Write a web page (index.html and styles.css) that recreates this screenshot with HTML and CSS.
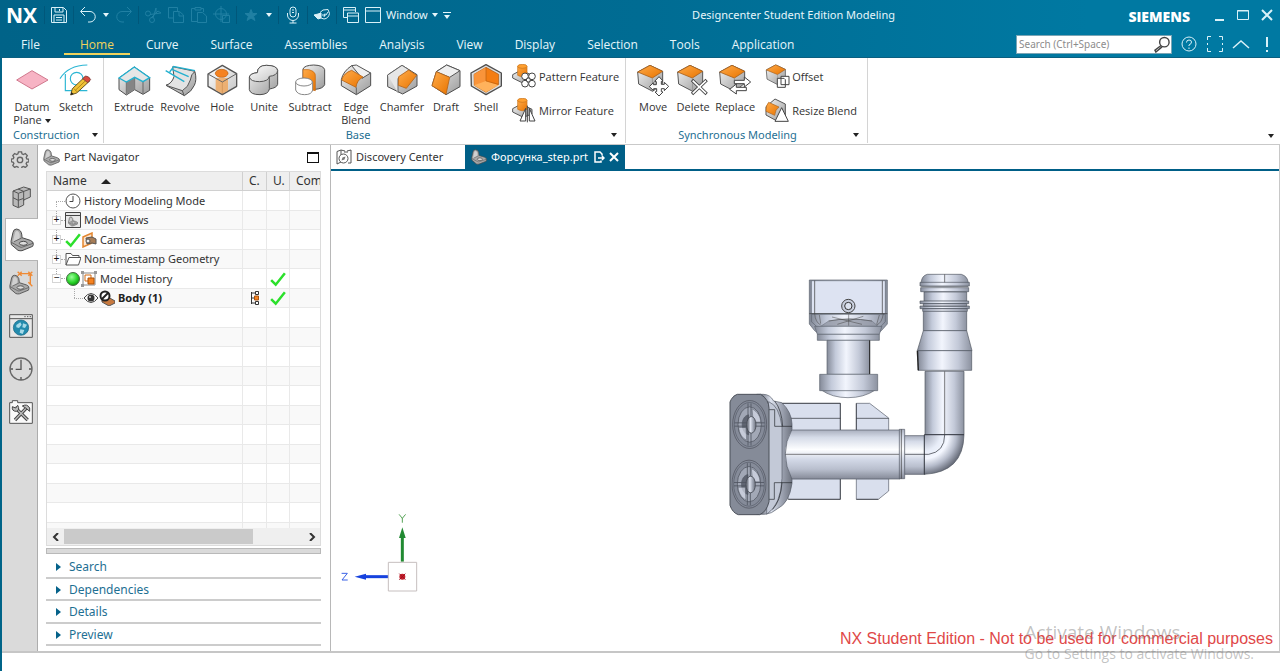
FILE: index.html
```html
<!DOCTYPE html>
<html lang="en">
<head>
<meta charset="utf-8">
<title>Designcenter Student Edition Modeling</title>
<link rel="stylesheet" href="styles.css">
</head>
<body>
<svg class="defs" aria-hidden="true">
  <defs>
    <linearGradient id="steel" x1="0" y1="0" x2="1" y2="1"><stop offset="0" stop-color="#f4f4f4"/><stop offset="1" stop-color="#9a9a9a"/></linearGradient>
    <linearGradient id="top" x1="0" y1="0" x2="1" y2="1"><stop offset="0" stop-color="#fff"/><stop offset="1" stop-color="#c4c4c4"/></linearGradient>
    <linearGradient id="orange" x1="0" y1="0" x2="1" y2="1"><stop offset="0" stop-color="#ffab4a"/><stop offset="1" stop-color="#e87400"/></linearGradient>
    <linearGradient id="vert" x1="0" y1="0" x2="1" y2="0"><stop offset="0" stop-color="#858b99"/><stop offset=".2" stop-color="#c3cada"/><stop offset=".45" stop-color="#f2f5fd"/><stop offset=".75" stop-color="#c3c9d8"/><stop offset="1" stop-color="#8c92a0"/></linearGradient>
    <linearGradient id="horz" x1="0" y1="0" x2="0" y2="1"><stop offset="0" stop-color="#a9afbe"/><stop offset=".15" stop-color="#d5dbe8"/><stop offset=".4" stop-color="#fdfeff"/><stop offset=".6" stop-color="#d3d9e7"/><stop offset=".8" stop-color="#b9bfce"/><stop offset="1" stop-color="#858a98"/></linearGradient>
    <linearGradient id="side" x1="0" y1="0" x2="1" y2="0"><stop offset="0" stop-color="#7b808c"/><stop offset=".15" stop-color="#7b808c"/><stop offset=".4" stop-color="#dfe4f0"/><stop offset=".7" stop-color="#a0a6b4"/><stop offset="1" stop-color="#6f7480"/></linearGradient>
    <radialGradient id="elbow" gradientUnits="userSpaceOnUse" cx="613" cy="509" r="120"><stop offset="0" stop-color="#9fa5b5"/><stop offset=".4" stop-color="#e8edf8"/><stop offset=".6" stop-color="#f4f7ff"/><stop offset=".8" stop-color="#b6bccb"/><stop offset="1" stop-color="#6b707d"/></radialGradient>
    <radialGradient id="green" cx=".4" cy=".35" r=".7"><stop offset="0" stop-color="#9bff9b"/><stop offset=".6" stop-color="#2ad42a"/><stop offset="1" stop-color="#0a8a0a"/></radialGradient>
    <symbol id="bracket" viewBox="0 0 72 72"><path d="M3 40 9 13Q11 3 20 3l8 3q8 5 8 23l25 8q10 4 9 12l-2 6-32 13q-6 1-12-1L4 50Z" fill="#a9a9a9" stroke="#4c4c4c" stroke-width="3" stroke-linejoin="round"/><path d="m9 40 6-26q2-7 9-4 7 6 5 21l-14 8Z" fill="#d0d0d0"/><path d="m4 43 26 14q4 2 8 0l31-11M35 30 12 41" fill="none" stroke="#5a5a5a" stroke-width="2.5"/><ellipse cx="40" cy="46" rx="12" ry="6" fill="#ddd" stroke="#4c4c4c" stroke-width="3"/></symbol>
    <symbol id="check" viewBox="0 0 14 14"><path d="M1 8l4 4L13 2" fill="none" stroke="#2be02b" stroke-width="2.2"/></symbol>
    <symbol id="cube" viewBox="0 0 102 102"><path d="M5 22 42 2 80 20v36L50 80 8 58Z" fill="url(#steel)" stroke="#555" stroke-width="3" stroke-linejoin="round"/><path d="m5 22 37-20 38 18-31 20Z" fill="url(#orange)" stroke="#a9601a" stroke-width="2.5" stroke-linejoin="round"/><path d="M49 41 50 78" stroke="#888" stroke-width="2"/></symbol>
    <symbol id="peg" viewBox="0 0 75 75"><path d="M2 32 28 18 60 34v14L34 58 2 42Z" fill="url(#steel)" stroke="#555" stroke-width="3"/><path d="M17 7v27q13 9 28 0V7Z" fill="url(#orange)" stroke="#c77118" stroke-width="2"/><ellipse cx="31" cy="7" rx="14" ry="6" fill="#ffa030" stroke="#c77118" stroke-width="2"/></symbol>
    <symbol id="port" viewBox="0 0 106 150"><ellipse cx="53" cy="75" rx="51" ry="72" fill="#858b99" stroke="#4b4f59" stroke-width="2"/><ellipse cx="53" cy="75" rx="46" ry="66" fill="none" stroke="#555a66" stroke-width="2"/><ellipse cx="53" cy="75" rx="35" ry="53" fill="#a2a8b6" stroke="#464a54" stroke-width="2"/><path d="M50 46c-26 4-26 54 0 60Z" fill="#606572"/><path d="M60 28c18 8 26 26 26 40H64ZM44 122c-14-6-22-20-24-38h22Z" fill="#d6dbe8" opacity=".7"/><path d="M8 70h90M8 80h90M48 12v126M57 12v126" stroke="#4f5460" stroke-width="2.5"/><ellipse cx="58" cy="76" rx="14" ry="25" fill="url(#side)" stroke="#464a54" stroke-width="2.5"/></symbol>
  </defs>
</svg>

<header class="header">
  <div class="titlebar">
    <strong class="logo">NX</strong>
    <div class="quick">
      <i class="sep"></i>
      <button aria-label="Save"><svg viewBox="0 0 18 18"><path d="M1.500 1.500h12l3 3v12h-15ZM5 2v4h8V2M9.500 3v2M4 16.500V9h10v7.500M6 11.500h6M6 14h6"/></svg></button>
      <i class="sep"></i>
      <button aria-label="Undo"><svg viewBox="0 0 18 18"><path d="M6 1 1.500 5.500 6 10M2 5.500h9a5 5 0 0 1 0 10.500H9"/></svg></button>
      <button class="caret" aria-label="Undo list"><svg viewBox="0 0 6 4"><path d="M0 0h6L3 4Z"/></svg></button>
      <button class="off" aria-label="Redo"><svg viewBox="0 0 18 18"><path d="m12 1 4.500 4.500L12 10M16 5.500H7A5 5 0 0 0 7 16h2"/></svg></button>
      <i class="sep"></i>
      <button class="off" aria-label="Cut"><svg viewBox="0 0 18 18"><circle cx="4" cy="7.500" r="2.500"/><circle cx="8" cy="14" r="2.500"/><path d="M6 8.500 17 7l-3-2L7 12M9 12l3-10v6"/></svg></button>
      <button class="off" aria-label="Copy"><svg viewBox="0 0 18 18"><path d="M6 12H1.500v-10.500h9V5M6.500 5.500h6l4 3.500v7.500h-10ZM12 6v4h4"/></svg></button>
      <button class="off" aria-label="Paste"><svg viewBox="0 0 18 18"><path d="M7 15.500H1.500v-13H5m6 0h2.500V6M5 1.500h6V4H5ZM7.500 6.500h5l4 3.500v6.500h-9Z"/></svg></button>
      <button class="off" aria-label="Move object"><svg viewBox="0 0 18 18"><circle cx="8" cy="8" r="5.500"/><path d="M8 0v16M0 8h16M9.500 9.500h7v7h-7Z"/></svg></button>
      <i class="sep"></i>
      <button class="off" aria-label="Favorites"><svg viewBox="0 0 18 18"><path class="solid" d="m9 3.500 1.600 4H15l-3.400 2.800 1.300 4.200L9 12l-3.900 2.500 1.300-4.200L3 7.500h4.400Z"/></svg></button>
      <button class="caret" aria-label="Favorites list"><svg viewBox="0 0 6 4"><path d="M0 0h6L3 4Z"/></svg></button>
      <i class="sep"></i>
      <button aria-label="Voice"><svg viewBox="0 0 18 18"><rect x="6" y="1" width="6" height="10" rx="3"/><path d="M3.500 7v2a5.500 5.500 0 0 0 11 0V7M9 14.500V17M5.500 17h7M8 4h2M8 6.500h2"/></svg></button>
      <i class="sep"></i>
      <button aria-label="Touch mode"><svg viewBox="0 0 18 18"><path class="solid" d="m1 9 4-1 3-1v5l-3 1-3-3Z"/><path d="M7 6.500 10 4l5-.5 1.500 4q-1 5-5.500 5.500L8 12M9 9h4l2-3M12 7.500 11 11"/></svg></button>
      <i class="sep"></i>
      <button aria-label="Switch window"><svg viewBox="0 0 18 18"><path d="M5 11.500H1.500v-10h12V6M2 4h11M5.500 7v9.500h11V7ZM6 10h10"/></svg></button>
      <button class="text-button"><svg viewBox="0 0 18 18"><path d="M1.500 1.500h15v15h-15ZM2 5h14"/></svg>Window<svg class="tri" viewBox="0 0 6 4"><path d="M0 0h6L3 4Z"/></svg></button>
      <button class="caret" aria-label="Customize toolbar"><svg class="more" viewBox="0 0 8 7"><path d="M0 0h8v1H0ZM1 3h6L4 7Z"/></svg></button>
    </div>
    <h1 class="title">Designcenter Student Edition Modeling</h1>
    <strong class="siemens">SIEMENS</strong>
    <div class="window-buttons">
      <button aria-label="Minimize"><svg viewBox="0 0 14 14"><path d="M3 12h9" stroke-width="2"/></svg></button>
      <button aria-label="Maximize"><svg viewBox="0 0 14 14"><path d="M1.500 2.500h11v9h-11ZM1 3h12"/></svg></button>
      <button aria-label="Close"><svg viewBox="0 0 14 14"><path d="m2 2 10 10M12 2 2 12" stroke-width="2"/></svg></button>
    </div>
  </div>
  <div class="menubar">
    <nav class="tabs">
      <button class="file">File</button><button class="current">Home</button><button>Curve</button><button>Surface</button><button>Assemblies</button><button>Analysis</button><button>View</button><button>Display</button><button>Selection</button><button>Tools</button><button>Application</button>
    </nav>
    <div class="search">
      <input type="text" placeholder="Search (Ctrl+Space)" aria-label="Search">
      <button aria-label="Run search"><svg viewBox="0 0 18 18"><circle cx="11.500" cy="6.500" r="5"/><path d="m8 10-6.500 5 1 2L9 11.500"/></svg></button>
    </div>
    <div class="help">
      <button aria-label="Help"><svg viewBox="0 0 18 18"><circle cx="9" cy="9" r="7"/><path d="M6.500 7.500q0-2.500 2.500-2.500t2.500 2-2.500 3v1M9 12.500V14"/></svg></button>
      <button aria-label="Full screen"><svg viewBox="0 0 18 18"><path d="M1.500 5V1.500H5m8 0h3.500V5m0 8v3.500H13m-8 0H1.500V13M1.500 8v2M16.500 8v2"/></svg></button>
      <button aria-label="Minimize ribbon"><svg viewBox="0 0 18 18"><path d="m1 13 8-7 8 7" stroke-width="1.500"/></svg></button>
      <button aria-label="Alerts"><svg viewBox="0 0 18 18"><path d="M9 2v10m0 3v2" stroke-width="2"/></svg></button>
    </div>
  </div>
</header>

<div class="app">
  <section class="ribbon" aria-label="Home">
    <div class="group construction">
      <div class="tools">
        <button class="tool mid"><svg viewBox="45 18 102 102"><path d="m50 66 46-28 48 28-48 27Z" fill="#f7b3c4" stroke="#d0788d" stroke-width="3"/></svg><span>Datum Plane <b class="down"></b></span></button>
        <button class="tool wide"><svg viewBox="177 18 102 102"><path d="M180 62Q204 22 262 21M196 48v50h66" fill="none" stroke="#2cb6d4" stroke-width="3.500"/><circle cx="230" cy="62" r="19" fill="none" stroke="#2cb6d4" stroke-width="3.500"/><path d="m212 111 5-19 38-36 15 12-40 37Z" fill="#f0c238" stroke="#4a3a10" stroke-width="2.500"/><path d="m221 91 12 12M226 97l36-34" stroke="#a87d14" stroke-width="2.500"/><path d="m248 62 9-8q10 0 15 11l-9 9Z" fill="#d94a40" stroke="#633" stroke-width="2"/><path d="m212 111 2-9 7 6Z" fill="#222"/></svg><span>Sketch</span></button>
      </div>
      <button class="group-name">Construction<b class="down"></b></button>
    </div>
    <div class="group base">
      <div class="tools">
        <button class="tool wide"><svg viewBox="351 18 102 102"><path d="m357 60 46-33 46 32v38l-20 12-25-14-25 16-22-16Z" fill="url(#steel)" stroke="#4e4e4e" stroke-width="3" stroke-linejoin="round"/><path d="M379 72v37M404 58v37M429 71v36" stroke="#666" stroke-width="3"/><path d="m380 73 23-14 1 36-24 14Z" fill="#858585"/><path d="m357 60 46-33 46 32-20 12-25-13-25 14Z" fill="#e6e6e6" stroke="#23b0cf" stroke-width="4"/></svg><span>Extrude</span></button>
        <button class="tool wide"><svg viewBox="489 18 102 102"><path d="M498 82q16-4 24-22l20-28 43 10q6 24-2 40-7 18-30 31Z" fill="url(#steel)" stroke="#4e4e4e" stroke-width="3" stroke-linejoin="round"/><path d="M498 82q18-6 24-26l-4-30 67 14q-12 8-14 26-6 22-24 32Z" fill="#e3e3e3" stroke="#555" stroke-width="3" stroke-linejoin="round"/><path d="m547 98 5 14" stroke="#555" stroke-width="3"/><path d="m519 25 66 13M497 38l56 33M509 42l12-16M516 34l50 22" stroke="#23b0cf" stroke-width="4"/></svg><span>Revolve</span></button>
        <button class="tool narrow"><svg viewBox="619 18 102 102"><path d="m628 48 43-26 43 25v38l-43 25-43-25Z" fill="url(#top)" stroke="#555" stroke-width="4" stroke-linejoin="round"/><path d="M671 72v38" stroke="#666" stroke-width="3"/><path d="M651 60h37v38l-17 9-20-10Z" fill="#f0a559" opacity=".8"/><path d="m628 48 43 24 43-25" fill="none" stroke="#666" stroke-width="3"/><ellipse cx="669" cy="46" rx="19" ry="12" fill="#f58220" stroke="#bb5d0c" stroke-width="2"/></svg><span>Hole</span></button>
        <button class="tool wide"><svg viewBox="747 18 102 102"><path d="M754 57q3-11 24-13 1-22 27-22 32 0 34 16v41q-3 11-25 14-2 16-28 17-29 0-32-15Z" fill="url(#steel)" stroke="#4e4e4e" stroke-width="3"/><path d="M754 57q3-11 24-13 1-22 27-22 32 0 34 16-2 15-25 17-2 15-29 16-28 0-31-14Z" fill="url(#top)" stroke="#555" stroke-width="3"/><path d="M814 56v36" stroke="#555" stroke-width="3"/></svg><span>Unite</span></button>
        <button class="tool wide"><svg viewBox="879 18 102 102"><path d="M909 33q4-11 32-12 30 1 33 14v45q-5 12-28 14l-37-20Z" fill="url(#steel)" stroke="#4e4e4e" stroke-width="3"/><path d="M909 35q20-3 30 5 9 7 7 17v41l-9-2V70q-8-9-28-10Z" fill="url(#orange)" stroke="#be6512" stroke-width="2"/><path d="M887 72v24q5 14 27 14 21 0 24-14V72" fill="#fff" stroke="#888" stroke-width="3"/><ellipse cx="912" cy="72" rx="25" ry="12" fill="#fff" stroke="#888" stroke-width="3"/></svg><span>Subtract</span></button>
        <button class="tool wide"><svg viewBox="54 18 102 102"><path d="m92 23 57 22v38l-43 27-45-27V65Q66 40 92 23Z" fill="url(#steel)" stroke="#4e4e4e" stroke-width="3" stroke-linejoin="round"/><path d="m92 23 14-2 43 24-26 16Z" fill="#f0f0f0" stroke="#555" stroke-width="3"/><path d="m92 37 34 20q-19 10-21 31L62 66q6-21 30-29Z" fill="url(#orange)" stroke="#b76417" stroke-width="2.500"/><path d="m106 88v21" stroke="#666" stroke-width="3"/></svg><span>Edge Blend</span></button>
        <button class="tool wide"><svg viewBox="195 18 102 102"><path d="m203 51 43-29 45 28v34l-43 24-45-22Z" fill="url(#steel)" stroke="#4e4e4e" stroke-width="3" stroke-linejoin="round"/><path d="m203 51 43-29 22 14-34 25v43" fill="#e6e6e6" stroke="#666" stroke-width="3"/><path d="m236 56 30-20 24 16-31 39-24-9Z" fill="url(#orange)" stroke="#b76417" stroke-width="2.500"/></svg><span>Chamfer</span></button>
        <button class="tool mid"><svg viewBox="331 18 102 102"><path d="m353 41 31-20 40 17v48l-42 24-42-27Z" fill="url(#steel)" stroke="#4e4e4e" stroke-width="3" stroke-linejoin="round"/><path d="m353 41 31-20 40 17-31 20Z" fill="#efefef" stroke="#555" stroke-width="3"/><path d="m353 41 40 17-11 51-42-26Z" fill="url(#orange)" stroke="#b76417" stroke-width="2.500"/></svg><span>Draft</span></button>
        <button class="tool narrow"><svg viewBox="448 18 102 102"><path d="m454 45 45-25 46 25v39l-46 26-44-26Z" fill="#ddd" stroke="#4e4e4e" stroke-width="4" stroke-linejoin="round"/><path d="m463 49 36-21 38 21v30l-38 24-35-21Z" fill="#f47d12" stroke="#a75712" stroke-width="2"/><path d="m463 49 36-21v45l-35 9Z" fill="#f9943a"/><path d="m463 82 36-13 38 13-38 21Z" fill="#ffb25c"/><path d="M499 28v41l38 10" fill="none" stroke="#b95d0c" stroke-width="2"/></svg><span>Shell</span></button>
        <div class="stack">
          <button><svg viewBox="579 22 75 75"><use href="#peg" x="579" y="22" width="75" height="75"/><g fill="#fff" stroke="#444" stroke-width="3"><circle cx="618" cy="59" r="10"/><circle cx="639" cy="59" r="10"/><circle cx="618" cy="81" r="10"/><circle cx="639" cy="81" r="10"/><circle cx="628" cy="70" r="6"/></g></svg>Pattern Feature</button>
          <button><svg viewBox="579 122 75 75"><use href="#peg" x="579" y="122" width="75" height="75"/><path d="m620 153-17 38h17ZM631 153l17 38h-17ZM625 145v50" fill="#fff" stroke="#444" stroke-width="3"/></svg>Mirror Feature</button>
        </div>
      </div>
      <button class="group-name">Base<b class="down"></b></button>
    </div>
    <div class="group sync">
      <div class="tools">
        <button class="tool mid"><svg viewBox="57 18 102 102"><use href="#cube" x="57" y="20" width="102" height="102"/><path d="m126 56 12 13-5 1v9h9v-6l13 12-13 13v-6h-9v9l5 1-12 12-12-12 5-1v-9h-9v6L97 86l12-12v6h9v-9l-5-1Z" fill="#fff" stroke="#444" stroke-width="3"/></svg><span>Move</span></button>
        <button class="tool narrow"><svg viewBox="177 18 102 102"><use href="#cube" x="177" y="20" width="102" height="102"/><path d="m225 66 44 42m0-42-44 42" stroke="#444" stroke-width="10"/><path d="m227 68 40 38m0-38-40 38" stroke="#fff" stroke-width="5"/></svg><span>Delete</span></button>
        <button class="tool wide"><svg viewBox="307 18 102 102"><use href="#cube" x="307" y="20" width="102" height="102"/><path d="M356 67h30V57l19 15-19 15V77h-30ZM392 88h-30V78l-20 16 20 14V98h30Z" fill="#fff" stroke="#444" stroke-width="3"/></svg><span>Replace</span></button>
        <div class="stack">
          <button><svg viewBox="449 22 75 75"><use href="#cube" x="449" y="23" width="78" height="78"/><path d="M497 59h24v25h-24ZM486 65h20l4 4v23h-24Z" fill="#fff" stroke="#444" stroke-width="3"/></svg>Offset</button>
          <button><svg viewBox="449 122 75 75"><path d="m452 148 27-23 31 15v33l-27 17-31-17Z" fill="url(#steel)" stroke="#555" stroke-width="3"/><path d="m460 135 31 14q-11 7-13 25l-26-12q-1-18 8-27Z" fill="url(#orange)" stroke="#a9601a" stroke-width="2"/><path d="m499 151-20 41h40Z" fill="#fff" stroke="#444" stroke-width="3"/></svg>Resize Blend</button>
        </div>
      </div>
      <button class="group-name">Synchronous Modeling<b class="down"></b></button>
    </div>
    <button class="ribbon-more" aria-label="Ribbon options"><b class="down"></b></button>
  </section>

  <main class="work">
    <nav class="rail" aria-label="Resource bar">
      <button class="gear" aria-label="Settings"><svg viewBox="0 0 20 20"><path d="M8.300 2h3.400l.5 2.300 1.600.8 2.100-1.200 2.200 2.200-1.200 2.100.6 1.600 2.300.5v2.800l-2.300.6-.7 1.500 1.300 2.200-2.200 2-2.100-1.200-1.600.7-.5 2.100H8.300l-.6-2.200-1.500-.6-2.200 1.200-2-2.200 1.200-2.100-.7-1.500-2.200-.6v-2.800l2.300-.5.6-1.600L2 6.100l2-2.200 2.200 1.200 1.500-.8Z" fill="none" stroke="#666" stroke-width="1.500"/><circle cx="10" cy="11" r="3" fill="none" stroke="#666" stroke-width="1.500"/></svg></button>
      <button aria-label="Assembly Navigator"><svg viewBox="0 0 72 72"><path d="m12 18 32-12 20 6v24l-20 9v15l-16 8-16-7Z" fill="#b9b9b9" stroke="#555" stroke-width="3" stroke-linejoin="round"/><path d="m12 18 16 7 36-13M28 25v42M28 46l16-6V20M12 38l16 8M27 12l17 7M44 40v8" fill="none" stroke="#555" stroke-width="3"/></svg></button>
      <button class="on" aria-label="Part Navigator"><svg viewBox="0 0 72 72"><use href="#bracket"/></svg></button>
      <button aria-label="Reuse Library"><svg viewBox="0 0 72 72"><use href="#bracket" x="0" y="10" width="62" height="62"/><path d="M32 8h32v32M26 2l12 12M38 2 26 14M58 2l12 12M70 2 58 14M58 34l12 12" fill="none" stroke="#ef8a35" stroke-width="4"/></svg></button>
      <button aria-label="Web Browser"><svg viewBox="0 0 72 72"><path d="M2 2h68v68H2ZM2 14h68" fill="#e8e8e8" stroke="#555" stroke-width="3"/><circle cx="36" cy="41" r="23" fill="#238bad" stroke="#17627e" stroke-width="2"/><path d="m22 33 12-8 4 7-8 10-8-2ZM42 28l12 4-6 10-8-2ZM34 46l12 2-5 12-9-4Z" fill="#a8dae8"/><path d="M46 8h4M54 8h4M62 8h4" stroke="#555" stroke-width="3"/></svg></button>
      <button aria-label="History"><svg viewBox="0 0 72 72"><circle cx="36" cy="36" r="33" fill="none" stroke="#666" stroke-width="4"/><path d="M36 8v29H20M36 60v8M4 36h8M60 36h8" fill="none" stroke="#555" stroke-width="4"/></svg></button>
      <button aria-label="Roles"><svg viewBox="0 0 72 72"><path d="M2 70V8h8V2h16v6h44v62Z" fill="#fafafa" stroke="#555" stroke-width="3"/><path d="m18 22 38 38M54 22 18 60" stroke="#444" stroke-width="10"/><path d="m18 22 38 38M54 22 18 60" stroke="#bbb" stroke-width="4"/><path d="M10 20q-2 14 12 14 12-4 4-18l-6 8ZM40 18q14-8 22 6v10L50 24Z" fill="#bbb" stroke="#444" stroke-width="3"/></svg></button>
    </nav>

    <section class="navigator">
      <header class="panel-head"><svg viewBox="0 0 72 72"><use href="#bracket"/></svg><h2>Part Navigator</h2><button aria-label="Undock"></button></header>
      <div class="tree-frame">
        <div class="tree">
          <table>
            <colgroup><col class="c-name"><col class="c-c"><col class="c-u"><col></colgroup>
            <thead><tr><th>Name<b class="up"></b></th><th>C.</th><th>U.</th><th>Com</th></tr></thead>
            <tbody>
              <tr><td><div class="node"><i class="tw"></i><svg viewBox="0 0 16 16"><circle cx="8" cy="8" r="7" fill="#fff" stroke="#555"/><path d="M8 3v5.500H4.500" fill="none" stroke="#444"/></svg>History Modeling Mode</div></td><td></td><td></td><td></td></tr>
              <tr><td><div class="node"><i class="tw box">+</i><svg viewBox="0 0 16 16"><path d="M.5.500h15v15H.500ZM1 3.500h14" fill="#e8e8e8" stroke="#444"/><use href="#bracket" x="3" y="4" width="10" height="11"/></svg>Model Views</div></td><td></td><td></td><td></td></tr>
              <tr><td><div class="node"><i class="tw box">+</i><svg viewBox="0 0 14 14"><use href="#check"/></svg><svg viewBox="0 0 16 16"><path d="m2 5 9-4v10l-9 4Z" fill="#fce6d0" stroke="#e3862f" stroke-width="1.500"/><path d="m5 6 6-1 4 2v5l-4-1-5 1Z" fill="#a77d57" stroke="#555"/><circle cx="7" cy="9" r="2" fill="#eee" stroke="#555"/></svg>Cameras</div></td><td></td><td></td><td></td></tr>
              <tr><td><div class="node"><i class="tw box">+</i><svg viewBox="0 0 16 16"><path d="M1 14V2.500h5l1.500 2H14v2M1 14 4 6.500h12L13.500 14Z" fill="#fff" stroke="#555"/></svg>Non-timestamp Geometry</div></td><td></td><td></td><td></td></tr>
              <tr><td><div class="node"><i class="tw box">−</i><svg viewBox="0 0 16 16"><circle cx="8" cy="8" r="6.500" fill="url(#green)" stroke="#476b47"/></svg><svg viewBox="0 0 16 16"><path d="M2 2h12v12H2Z" fill="#fff" stroke="#888"/><path d="M4 4h6v6H4Z" fill="#fff" stroke="#d36b12"/><path d="M7 7h6v6H7Z" fill="#f58220" stroke="#a95009"/><path d="M0 0h3v3H0ZM13 0h3v3h-3ZM0 13h3v3H0Z" fill="#999"/></svg>Model History</div></td><td></td><td><svg class="mark" viewBox="0 0 14 14"><use href="#check"/></svg></td><td></td></tr>
              <tr><td><div class="node child"><i class="tw"></i><svg viewBox="0 0 16 16"><path d="M1 8q7-9 14 0-7 9-14 0Z" fill="#fff" stroke="#444"/><circle cx="8" cy="8" r="3.500" fill="#333"/><circle cx="7" cy="7" r="1" fill="#ccc"/></svg><svg viewBox="0 0 16 16"><path d="m3 10 6-3 7 4v2l-6 3-7-4Z" fill="#c87a40" stroke="#555"/><circle cx="6" cy="6" r="4.500" fill="#fff" stroke="#222" stroke-width="2"/><path d="m3 9 6-6" stroke="#222" stroke-width="2"/></svg><b>Body (1)</b></div></td><td><svg class="mark" viewBox="0 0 16 16"><path d="M4.500 2v12M4.500 3H8M4.500 13H8M4.500 8H7" stroke="#333" fill="none"/><path d="M8.500 1.500h3v3h-3ZM8.500 11.500h3v3h-3Z" fill="#fff" stroke="#333"/><path d="M7.500 6h4v4h-4Z" fill="#f58220" stroke="#a55312"/></svg></td><td><svg class="mark" viewBox="0 0 14 14"><use href="#check"/></svg></td><td></td></tr>
              <tr><td></td><td></td><td></td><td></td></tr><tr><td></td><td></td><td></td><td></td></tr><tr><td></td><td></td><td></td><td></td></tr><tr><td></td><td></td><td></td><td></td></tr><tr><td></td><td></td><td></td><td></td></tr><tr><td></td><td></td><td></td><td></td></tr><tr><td></td><td></td><td></td><td></td></tr><tr><td></td><td></td><td></td><td></td></tr><tr><td></td><td></td><td></td><td></td></tr><tr><td></td><td></td><td></td><td></td></tr><tr><td></td><td></td><td></td><td></td></tr><tr><td></td><td></td><td></td><td></td></tr>
            </tbody>
          </table>
        </div>
        <div class="hscroll"><button aria-label="Scroll left"><svg viewBox="0 0 8 8"><path d="M6 0 2 4l4 4"/></svg></button><div class="track"><div class="thumb"></div></div><button aria-label="Scroll right"><svg viewBox="0 0 8 8"><path d="m2 0 4 4-4 4"/></svg></button></div>
      </div>
      <div class="splitter"></div>
      <div class="sections"><button>Search</button><button>Dependencies</button><button>Details</button><button>Preview</button></div>
    </section>

    <section class="stage">
      <div class="doc-tabs">
        <button class="discovery"><svg viewBox="0 0 16 16"><path d="M1 2.500 5 1v12l-4 2ZM11 4V2l4-1v13h-3M5 1l4 1v2" fill="none" stroke="#555"/><circle cx="7.500" cy="9.500" r="4.500" fill="#fff" stroke="#555"/><path d="m5.500 11.500 1-3 3-1-1 3Z" fill="#777"/></svg>Discovery Center</button>
        <div class="doc">
          <button class="doc-name"><svg viewBox="0 0 72 72"><use href="#bracket"/></svg>Форсунка_step.prt</button>
          <button aria-label="Modified"><svg viewBox="0 0 12 12"><path d="M8 9.500V11H2V1h5l2 2v1.500M5 7h6M9 5l2 2-2 2"/></svg></button>
          <button aria-label="Close part"><svg class="bold" viewBox="0 0 12 12"><path d="m2 2 8 8M10 2l-8 8"/></svg></button>
        </div>
      </div>
      <div class="canvas">
        <svg class="model" viewBox="0 0 780 780" role="img" aria-label="Injector model">
          <g stroke="#5b606c" stroke-width="2">
            <path d="M268 45h234v132l-18 20-8 6H292l-8-6-16-20Z" fill="url(#vert)"/>
            <path d="M274 47h222v99H274Z" fill="#dde3f2"/>
            <path d="M284 47v99M487 47v99M268 146h234" stroke="#333"/>
            <path d="M274 148h222v22l-20 22H298l-24-22Z" fill="url(#vert)"/>
            <path d="M326 168q60-12 130 0l18 16H302Z" fill="#8b909d" opacity=".7"/>
            <path d="M284 146q2 26 18 34M490 146q-4 28-20 34M298 150l4 26M478 150l-8 28M326 168q60-12 130 0M386 148v34M352 178l78-24M336 156l90 22" fill="none" stroke="#444" stroke-width="1.500"/>
            <path d="M284 184h202l-8 24H292Z" fill="url(#vert)"/><path d="M292 208h186v18H292Z" fill="url(#vert)"/>
            <path d="M321 226h128v102H321Z" fill="url(#vert)"/><path d="M449 226v102" stroke="#222" stroke-width="3"/>
            <path d="M304 375h162q-34 23-82 23t-80-23Z" fill="url(#vert)"/><path d="M299 328h174v49H299Z" fill="url(#vert)"/>
            <circle cx="385" cy="123" r="20" fill="#c8cedd" stroke="#444" stroke-width="3"/><circle cx="385" cy="123" r="11" fill="#dce2ef" stroke="#333" stroke-width="3"/>
          </g>
          <g stroke="#4f545f" stroke-width="2" fill="url(#vert)">
            <path d="M604 50q2-18 18-22h102q18 6 20 22v14H604Z"/>
            <path d="M600 52h148v11H600ZM602 68h144v12H602Z"/>
            <path d="M612 81h128v28H612Z"/><path d="M600 108h146v8H600ZM610 116h130v8H610ZM600 123h148v8H600ZM608 131h134v8H608Z"/>
            <path d="M610 139h130v58H610Z"/><path d="m610 197-18 60h164l-16-60Z"/><path d="M594 257h161v59H594Z"/><path d="m592 257 3 59" stroke="#222" stroke-width="4"/>
            <path d="M615 319h117v190H615Z"/><path d="M674 28v24M674 319v195" fill="none" stroke="#444"/>
            <path d="M553 512h62v116h-62Z" fill="url(#horz)"/>
            <path d="M613 512v-3h119q-2 113-119 119Z" fill="url(#elbow)"/>
            <path d="M613 509h119M613 510v118M674 510q0 50-48 58h-72" fill="none" stroke="#252830"/>
          </g>
          <g stroke="#555b67" stroke-width="2">
            <path d="M180 415h181v82H180ZM190 641h171v62H205Z" fill="#d9dfed"/><path d="M210 460h151M180 415h181M205 703h156M361 415v82M361 641v62" stroke="#272a31"/>
            <path d="M409 415h40l57 44v38h-97ZM409 641h97v37l-31 25h-66Z" fill="#d9dfed"/><path d="M409 460h97M409 415v82M409 703h66" stroke="#272a31"/>
            <path d="M190 495h350v147H190Z" fill="url(#horz)"/><path d="M190 568h350" stroke="#444"/>
            <path d="M538 493h16v148h-16Z" fill="url(#horz)"/><path d="M544 493v148" stroke="#333"/>
            <path d="M130 388q20 0 31 20l24 5q30 28 31 64v16q-40 72 0 150v12q-8 60-45 77-15 14-37 16H110V388Z" fill="url(#side)"/>
            <path d="M146 410q32 12 40 76v154q-3 80-46 108V430Z" fill="#c3c9d7"/>
            <path d="M146 434h18v50h52M216 653h-53v50h-18M164 408q21 26 24 76M186 653q-4 54-28 80" fill="none" stroke="#22252b"/>
            <path d="m52 388h70q25 16 25 42v280q-7 30-28 39H55q-17-5-25-28V411q7-18 22-23Z" fill="#858b98" stroke="#4b5059" stroke-width="3"/>
            <use href="#port" x="36" y="401" width="106" height="155"/><use href="#port" x="34" y="580" width="106" height="155"/>
          </g>
        </svg>
        <svg class="triad" viewBox="0 0 240 240" role="img" aria-label="View axes"><g stroke-linecap="round" stroke-linejoin="round" fill="none" stroke-width="3"><path d="m178 11 9 11 9-11M187 22v12" stroke="#56a356"/><path d="M6 187h16L6 207h16" stroke="#3a62e6"/></g><path d="M187 152V76" stroke="#218a32" stroke-width="9"/><path d="m187 49 10 32h-20Z" fill="#218a32"/><path d="M146 197H72" stroke="#1642de" stroke-width="9"/><path d="m44 197 34-9v18Z" fill="#1642de"/><path d="M145 154h85v86h-85Z" fill="#fff" stroke="#c6bfbf" stroke-width="3"/><circle cx="187" cy="197" r="9" fill="#c5202c"/><path d="m178 188 18 18M196 188l-18 18" stroke="#a01020" stroke-width="3"/></svg>
        <p class="edition">NX Student Edition - Not to be used for commercial purposes</p>
      </div>
    </section>
  </main>
  <footer class="status"></footer>
</div>
<div class="activate"><strong>Activate Windows</strong><span>Go to Settings to activate Windows.</span></div>
</body>
</html>
```
FILE: styles.css
```css
* { box-sizing: border-box; }
body { margin: 0; min-height: 100vh; display: flex; flex-direction: column; position: relative; background: #fff; color: #333; font: 12px/16px "Noto Sans", "Open Sans", sans-serif; }
button { border: 0; padding: 0; background: none; color: inherit; font: inherit; display: flex; align-items: center; }
svg { display: block; flex: none; }
h1, h2, p { margin: 0; font: inherit; }
.defs { position: absolute; width: 0; height: 0; }

.header { background: linear-gradient(90deg, #006388, #006c93 50%, #0079a2 85%); color: #e6f6fb; height: 58px; border-bottom: 1px solid #0a5f80; }
.titlebar { display: flex; align-items: center; height: 30px; padding: 0 6px; }
.logo { font: 700 21px/30px "Open Sans", sans-serif; color: #fff; width: 36px; }
.quick { display: flex; align-items: center; gap: 1px; font-size: 11px; }
.quick .sep { width: 1px; height: 18px; margin: 0 2px; background: #00577a; }
.quick button { width: 22px; height: 24px; justify-content: center; }
.quick svg, .window-buttons svg, .help svg { fill: none; stroke: #d9f1f8; }
.quick svg { width: 18px; height: 18px; }
.quick .solid { fill: #d9f1f8; }
.quick .off svg { stroke: #2080a3; }
.quick .off .solid { fill: #2080a3; }
.quick button.caret { width: 12px; }
.quick .caret svg, .quick .tri { width: 6px; height: 4px; fill: #e6f6fb; stroke: none; }
.quick .caret .more { width: 8px; height: 7px; }
.quick button.text-button { width: auto; gap: 4px; padding: 0 2px 0 1px; }
.title { flex: 1; text-align: center; font-size: 11px; padding-left: 6px; }
.siemens { font: 800 14px/26px "Open Sans", sans-serif; color: #fff; padding-top: 4px; }
.window-buttons { display: flex; gap: 10px; margin-left: 22px; }
.window-buttons svg { width: 14px; height: 14px; }
.menubar { display: flex; align-items: center; height: 28px; padding-right: 4px; }
.tabs { display: flex; align-self: stretch; flex: 1; padding-left: 5px; font-family: "Open Sans", sans-serif; }
.tabs button { padding: 6px 16px 0; border-bottom: 2px solid transparent; margin-bottom: 3px; }
.tabs .file { margin-right: 8px; }
.tabs .current { color: #f1d25b; border-color: #f1d25b; }
.search { display: flex; width: 156px; height: 19px; background: #fff; border: 1px solid #7aa5b5; }
.search input { flex: 1; min-width: 0; border: 0; padding: 0 2px; background: none; font: 10px/16px "Noto Sans", sans-serif; outline: 0; }
.search input::placeholder { color: #8c8c8c; }
.search svg { width: 18px; height: 17px; fill: none; stroke: #444; stroke-width: 1.500; }
.help { display: flex; gap: 8px; margin-left: 8px; }
.help svg { width: 18px; height: 18px; }

.app { flex: 1; display: flex; flex-direction: column; border-left: 2px solid #006488; }
.ribbon { display: flex; height: 87px; border-bottom: 1px solid #c9c9c9; font: 11px/13px "Open Sans", sans-serif; }
.group { display: flex; flex-direction: column; padding: 6px 6px 0 7px; position: relative; margin-bottom: 1px; border-right: 1px solid #d4d4d4; }
.group.construction { padding: 6px 4px 0 9px; }
.group .tools { display: flex; flex: 1; align-items: flex-start; }
.tool { flex-direction: column; }
.tool svg { width: 34px; height: 34px; margin-bottom: 2px; }
.tool.wide { width: 46px; }
.tool.mid { width: 42px; }
.tool.narrow { width: 38px; }
.tool span { text-align: center; }
.down { display: inline-block; border: 3px solid transparent; border-top: 4px solid #222; border-bottom: 0; vertical-align: middle; }
.group-name { color: #1e6f93; font-family: "Noto Sans", sans-serif; line-height: 16px; gap: 12px; padding-left: 2px; }
.base .group-name, .sync .group-name { justify-content: center; padding-right: 16px; }
.base .group-name .down, .sync .group-name .down { position: absolute; right: 8px; bottom: 6px; }
.stack { display: grid; row-gap: 9px; margin-left: 7px; }
.stack button { gap: 2px; height: 25px; white-space: nowrap; }
.stack svg { width: 25px; height: 25px; }
.sync { padding-left: 6px; padding-right: 10px; }
.ribbon-more { margin: auto 6px 6px auto; }

.work { flex: 1; display: flex; min-height: 0; border-bottom: 2px solid #c6c6c6; }
.rail { width: 36px; background: #dadada; border-right: 1px solid #adadad; }
.rail button { width: 36px; height: 43px; justify-content: center; padding-left: 2px; }
.rail button.gear { height: 30px; padding-bottom: 3px; padding-left: 0; }
.rail svg { width: 24px; height: 24px; }
.rail .gear svg { width: 18px; height: 18px; }
.rail .on { background: #fff; border: 1px solid #b5b5b5; border-right: 0; margin-left: 3px; width: 33px; padding: 0; }
.navigator { width: 293px; padding: 0 9px 5px 8px; border-right: 1px solid #b8b8b8; display: flex; flex-direction: column; font-size: 11px; }
.panel-head { display: flex; align-items: center; height: 26px; padding-bottom: 2px; gap: 4px; margin-left: -3px; }
.panel-head svg { width: 17px; height: 17px; }
.panel-head button { width: 12px; height: 11px; margin: 0 2px 0 auto; border: 1px solid #111; border-top-width: 2px; }
.tree-frame { flex: 1; min-height: 0; display: flex; flex-direction: column; border: 1px solid #dcdcdc; }
.tree { flex: 1 1 0; min-height: 0; overflow: hidden; }
table { width: 100%; table-layout: fixed; border-collapse: separate; border-spacing: 0; white-space: nowrap; }
.c-name { width: 196px; }
.c-c { width: 24px; }
.c-u { width: 23px; }
th, td { padding: 0; height: 20px; border-right: 1px solid #e9e9e9; border-bottom: 1px solid #e9e9e9; overflow: hidden; }
th { height: 19px; line-height: 18px; font-weight: 400; font-size: 12px; text-align: left; background: #efefef; padding-left: 6px; border-color: #d0d0d0; }
td:last-child, th:last-child { border-right: 0; }
tbody tr:nth-child(even) td { height: 19px; background: #f9f9f9; }
.up { display: inline-block; border: 5px solid transparent; border-bottom: 5px solid #222; border-top: 0; margin-left: 14px; vertical-align: middle; }
.node { display: flex; align-items: center; height: 18px; padding-left: 5px; }
.node svg { width: 16px; height: 16px; }
.node > svg:last-of-type { margin-right: 3px; }
.node b { color: #222; }
.tw { width: 13px; font: 400 10px/9px "Liberation Mono", monospace; color: #111; text-align: center; position: relative; }
.tw::before { content: ""; position: absolute; left: 4px; top: 0; width: 9px; border-top: 1px dotted #aaa; }
.tw.box { width: 9px; height: 9px; margin-right: 4px; border: 1px solid #d5d5d5; line-height: 7px; background: #fff; }
.tw.box::before { left: 8px; top: 3px; width: 4px; }
.tw::after { content: ""; position: absolute; left: 4px; top: 0; height: 6px; border-left: 1px dotted #aaa; }
.tw.box::after { left: 3px; top: -11px; height: 10px; }
.child { padding-left: 23px; }
.child .tw::after { top: -9px; height: 9px; }
.mark { width: 16px; height: 16px; margin: 0 auto; }
.hscroll { display: flex; align-items: center; height: 17px; background: #efefef; }
.hscroll button { width: 17px; height: 17px; justify-content: center; }
.hscroll svg { width: 8px; height: 8px; fill: none; stroke: #333; stroke-width: 2; }
.track { flex: 1; height: 15px; }
.thumb { width: 79%; height: 15px; background: #cacaca; }
.splitter { height: 6px; margin: 2px 0; background: #dadada; border: 1px solid #b9b9b9; }
.sections { display: grid; grid-template-rows: repeat(4, 1fr); height: 90px; color: #1e6f93; font-size: 12px; }
.sections button { border-bottom: 2px solid #ccc; padding: 2px 0 0 10px; gap: 8px; }
.sections button::before { content: ""; border: 4px solid transparent; border-left: 5px solid #05628a; border-right: 0; }
.stage { flex: 1; display: flex; flex-direction: column; min-width: 0; border-right: 1px solid #c8c8c8; }
.doc-tabs { display: flex; height: 26px; border-bottom: 2px solid #005f87; font-size: 11px; }
.doc-tabs svg { width: 16px; height: 16px; }
.discovery { width: 134px; padding-left: 5px; gap: 4px; }
.doc { display: flex; color: #fff; background: #005f87; padding: 0 5px 0 6px; gap: 3px; }
.doc-name { gap: 4px; padding-right: 2px; }
.doc button + button svg { width: 12px; height: 12px; fill: none; stroke: #fff; stroke-width: 1.500; }
.doc button + button .bold { stroke-width: 2; }
.canvas { flex: 1; position: relative; overflow: hidden; }
.model { position: absolute; left: 389px; top: 94px; width: 260px; height: 260px; }
.triad { position: absolute; left: 9px; bottom: 60px; width: 80px; height: 80px; overflow: visible; }
.edition { position: absolute; right: 6px; bottom: 2px; font: 16px/20px "Liberation Sans", sans-serif; color: #e04848; }
.status { height: 18px; }
.activate { position: absolute; right: 26px; bottom: 8px; display: flex; flex-direction: column; color: rgba(120, 120, 120, .45); pointer-events: none; }
.activate strong { font: 400 19px/26px "Open Sans", sans-serif; }
.activate span { font: 14px/18px "Open Sans", sans-serif; }
```
